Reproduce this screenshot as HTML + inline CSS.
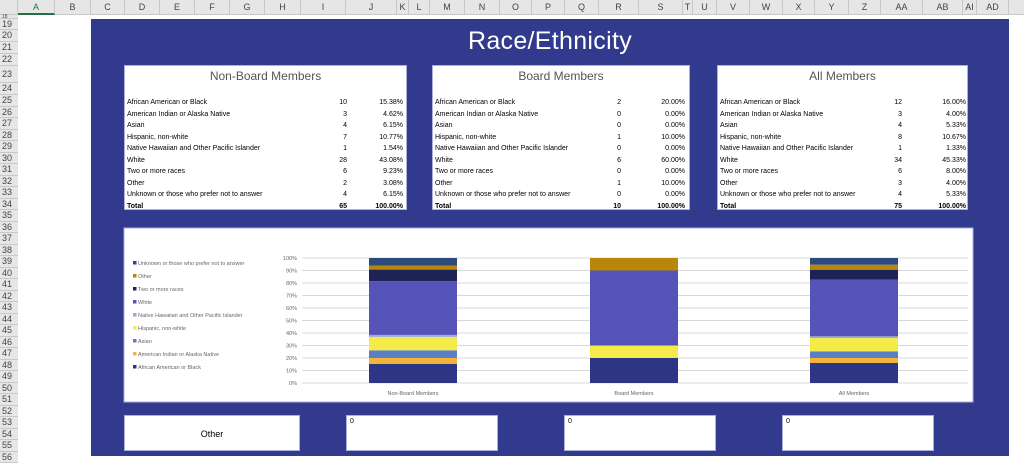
<!DOCTYPE html>
<html><head><meta charset="utf-8"><style>
*{margin:0;padding:0;box-sizing:border-box}
body{width:1024px;height:458px;overflow:hidden;background:#fff;position:relative;font-family:"Liberation Sans",sans-serif}
.hdr{position:absolute;top:0;left:0;width:1024px;height:15px;background:#e6e6e6;border-bottom:1px solid #c8c8c8}
.ch{position:absolute;top:0;height:15px;font-size:9px;color:#444;text-align:center;line-height:15px;border-right:1px solid #c8c8c8}
.rn{position:absolute;left:0;width:18px;font-size:9px;color:#444;background:#e6e6e6;border-bottom:1px solid #c8c8c8;line-height:11px;padding-left:2px}
.blue{position:absolute;left:91px;top:19px;width:918px;height:437px;background:#313a8c}
.title{position:absolute;left:91px;width:918px;top:27px;text-align:center;color:#fff;font-size:25px;letter-spacing:.3px}
.card{position:absolute;background:#fff;border:1px solid #aab0d8}
.card h3{font-weight:normal;font-size:12px;text-align:center;color:#555;margin-top:3px;height:28px}
.card table{border-collapse:collapse;font-size:7px;color:#000;margin-left:2px}
.card td{height:11.5px;padding:0}
.card td.n{text-align:right}
.card tr.t td{font-weight:bold}
.box{position:absolute;background:#fff;border:1px solid #aab0d8;font-size:7px;padding:2px 3px}
</style></head><body>
<div class="hdr"></div>
<div class="ch" style="left:0;width:18px"></div>
<div class="ch" style="left:18px;width:37px;border-bottom:2px solid #217346;color:#217346">A</div>
<div class="ch" style="left:55px;width:36px">B</div>
<div class="ch" style="left:91px;width:34px">C</div>
<div class="ch" style="left:125px;width:35px">D</div>
<div class="ch" style="left:160px;width:35px">E</div>
<div class="ch" style="left:195px;width:35px">F</div>
<div class="ch" style="left:230px;width:35px">G</div>
<div class="ch" style="left:265px;width:36px">H</div>
<div class="ch" style="left:301px;width:45px">I</div>
<div class="ch" style="left:346px;width:51px">J</div>
<div class="ch" style="left:397px;width:12px">K</div>
<div class="ch" style="left:409px;width:21px">L</div>
<div class="ch" style="left:430px;width:35px">M</div>
<div class="ch" style="left:465px;width:35px">N</div>
<div class="ch" style="left:500px;width:32px">O</div>
<div class="ch" style="left:532px;width:33px">P</div>
<div class="ch" style="left:565px;width:34px">Q</div>
<div class="ch" style="left:599px;width:40px">R</div>
<div class="ch" style="left:639px;width:44px">S</div>
<div class="ch" style="left:683px;width:10px">T</div>
<div class="ch" style="left:693px;width:24px">U</div>
<div class="ch" style="left:717px;width:33px">V</div>
<div class="ch" style="left:750px;width:33px">W</div>
<div class="ch" style="left:783px;width:32px">X</div>
<div class="ch" style="left:815px;width:34px">Y</div>
<div class="ch" style="left:849px;width:32px">Z</div>
<div class="ch" style="left:881px;width:42px">AA</div>
<div class="ch" style="left:923px;width:40px">AB</div>
<div class="ch" style="left:963px;width:14px">AI</div>
<div class="ch" style="left:977px;width:32px">AD</div>

<div class="rn" style="top:15px;height:4px;line-height:4px;font-size:5px">18</div>
<div class="rn" style="top:19px;height:11px">19</div>
<div class="rn" style="top:30px;height:12px">20</div>
<div class="rn" style="top:42px;height:12px">21</div>
<div class="rn" style="top:54px;height:12px">22</div>
<div class="rn" style="top:66px;height:17px;line-height:17px">23</div>
<div class="rn" style="top:83px;height:12px">24</div>
<div class="rn" style="top:95px;height:11.5px">25</div>
<div class="rn" style="top:106.5px;height:11.5px">26</div>
<div class="rn" style="top:118px;height:11.5px">27</div>
<div class="rn" style="top:129.5px;height:11.5px">28</div>
<div class="rn" style="top:141px;height:11.5px">29</div>
<div class="rn" style="top:152.5px;height:11.5px">30</div>
<div class="rn" style="top:164px;height:11.5px">31</div>
<div class="rn" style="top:175.5px;height:11.5px">32</div>
<div class="rn" style="top:187px;height:11.5px">33</div>
<div class="rn" style="top:198.5px;height:11.5px">34</div>
<div class="rn" style="top:210px;height:11.5px">35</div>
<div class="rn" style="top:221.5px;height:11.5px">36</div>
<div class="rn" style="top:233px;height:11.5px">37</div>
<div class="rn" style="top:244.5px;height:11.5px">38</div>
<div class="rn" style="top:256px;height:11.5px">39</div>
<div class="rn" style="top:267.5px;height:11.5px">40</div>
<div class="rn" style="top:279px;height:11.5px">41</div>
<div class="rn" style="top:290.5px;height:11.5px">42</div>
<div class="rn" style="top:302px;height:11.5px">43</div>
<div class="rn" style="top:313.5px;height:11.5px">44</div>
<div class="rn" style="top:325px;height:11.5px">45</div>
<div class="rn" style="top:336.5px;height:11.5px">46</div>
<div class="rn" style="top:348px;height:11.5px">47</div>
<div class="rn" style="top:359.5px;height:11.5px">48</div>
<div class="rn" style="top:371px;height:11.5px">49</div>
<div class="rn" style="top:382.5px;height:11.5px">50</div>
<div class="rn" style="top:394px;height:11.5px">51</div>
<div class="rn" style="top:405.5px;height:11.5px">52</div>
<div class="rn" style="top:417px;height:11.5px">53</div>
<div class="rn" style="top:428.5px;height:11.5px">54</div>
<div class="rn" style="top:440px;height:11.5px">55</div>
<div class="rn" style="top:451.5px;height:11.5px">56</div>

<div class="blue"></div>
<div class="title">Race/Ethnicity</div>

<div class="card" style="left:124px;top:65px;width:283px;height:145px"><h3>Non-Board Members</h3><table style="width:276px">
<tr><td>African American or Black</td><td class="n" style="width:30px">10</td><td class="n" style="width:56px">15.38%</td></tr>
<tr><td>American Indian or Alaska Native</td><td class="n">3</td><td class="n">4.62%</td></tr>
<tr><td>Asian</td><td class="n">4</td><td class="n">6.15%</td></tr>
<tr><td>Hispanic, non-white</td><td class="n">7</td><td class="n">10.77%</td></tr>
<tr><td>Native Hawaiian and Other Pacific Islander</td><td class="n">1</td><td class="n">1.54%</td></tr>
<tr><td>White</td><td class="n">28</td><td class="n">43.08%</td></tr>
<tr><td>Two or more races</td><td class="n">6</td><td class="n">9.23%</td></tr>
<tr><td>Other</td><td class="n">2</td><td class="n">3.08%</td></tr>
<tr><td>Unknown or those who prefer not to answer</td><td class="n">4</td><td class="n">6.15%</td></tr>
<tr class="t"><td>Total</td><td class="n">65</td><td class="n">100.00%</td></tr></table></div>

<div class="card" style="left:432px;top:65px;width:258px;height:145px"><h3>Board Members</h3><table style="width:250px">
<tr><td>African American or Black</td><td class="n" style="width:30px">2</td><td class="n" style="width:64px">20.00%</td></tr>
<tr><td>American Indian or Alaska Native</td><td class="n">0</td><td class="n">0.00%</td></tr>
<tr><td>Asian</td><td class="n">0</td><td class="n">0.00%</td></tr>
<tr><td>Hispanic, non-white</td><td class="n">1</td><td class="n">10.00%</td></tr>
<tr><td>Native Hawaiian and Other Pacific Islander</td><td class="n">0</td><td class="n">0.00%</td></tr>
<tr><td>White</td><td class="n">6</td><td class="n">60.00%</td></tr>
<tr><td>Two or more races</td><td class="n">0</td><td class="n">0.00%</td></tr>
<tr><td>Other</td><td class="n">1</td><td class="n">10.00%</td></tr>
<tr><td>Unknown or those who prefer not to answer</td><td class="n">0</td><td class="n">0.00%</td></tr>
<tr class="t"><td>Total</td><td class="n">10</td><td class="n">100.00%</td></tr></table></div>

<div class="card" style="left:717px;top:65px;width:251px;height:145px"><h3>All Members</h3><table style="width:246px">
<tr><td>African American or Black</td><td class="n" style="width:36px">12</td><td class="n" style="width:64px">16.00%</td></tr>
<tr><td>American Indian or Alaska Native</td><td class="n">3</td><td class="n">4.00%</td></tr>
<tr><td>Asian</td><td class="n">4</td><td class="n">5.33%</td></tr>
<tr><td>Hispanic, non-white</td><td class="n">8</td><td class="n">10.67%</td></tr>
<tr><td>Native Hawaiian and Other Pacific Islander</td><td class="n">1</td><td class="n">1.33%</td></tr>
<tr><td>White</td><td class="n">34</td><td class="n">45.33%</td></tr>
<tr><td>Two or more races</td><td class="n">6</td><td class="n">8.00%</td></tr>
<tr><td>Other</td><td class="n">3</td><td class="n">4.00%</td></tr>
<tr><td>Unknown or those who prefer not to answer</td><td class="n">4</td><td class="n">5.33%</td></tr>
<tr class="t"><td>Total</td><td class="n">75</td><td class="n">100.00%</td></tr></table></div>

<svg style="position:absolute;left:0;top:0" width="1024" height="458" font-family="Liberation Sans, sans-serif">
<rect x="124" y="228" width="849" height="174" fill="#fff" stroke="#aab0d8"/>
<g stroke="#d9d9d9" stroke-width="1">
<line x1="302" x2="968" y1="258" y2="258"/><line x1="302" x2="968" y1="270.5" y2="270.5"/><line x1="302" x2="968" y1="283" y2="283"/><line x1="302" x2="968" y1="295.5" y2="295.5"/><line x1="302" x2="968" y1="308" y2="308"/><line x1="302" x2="968" y1="320.5" y2="320.5"/><line x1="302" x2="968" y1="333" y2="333"/><line x1="302" x2="968" y1="345.5" y2="345.5"/><line x1="302" x2="968" y1="358" y2="358"/><line x1="302" x2="968" y1="370.5" y2="370.5"/><line x1="302" x2="968" y1="383" y2="383"/>
</g>
<g font-size="5.5" fill="#666" text-anchor="end">
<text x="297" y="260">100%</text><text x="297" y="272.5">90%</text><text x="297" y="285">80%</text><text x="297" y="297.5">70%</text><text x="297" y="310">60%</text><text x="297" y="322.5">50%</text><text x="297" y="335">40%</text><text x="297" y="347.5">30%</text><text x="297" y="360">20%</text><text x="297" y="372.5">10%</text><text x="297" y="385">0%</text>
</g>
<g>
<rect x="369" y="363.8" width="88" height="19.2" fill="#2e3585"/>
<rect x="369" y="358" width="88" height="5.8" fill="#f4b43c"/>
<rect x="369" y="350.3" width="88" height="7.7" fill="#5b7fc4"/>
<rect x="369" y="336.9" width="88" height="13.4" fill="#f4ea4a"/>
<rect x="369" y="334.9" width="88" height="2" fill="#9aabd8"/>
<rect x="369" y="281.1" width="88" height="53.8" fill="#5552b8"/>
<rect x="369" y="269.6" width="88" height="11.5" fill="#1f2255"/>
<rect x="369" y="265.7" width="88" height="3.9" fill="#b8860b"/>
<rect x="369" y="258" width="88" height="7.7" fill="#2d4a7a"/>

<rect x="590" y="358" width="88" height="25" fill="#2e3585"/>
<rect x="590" y="345.5" width="88" height="12.5" fill="#f4ea4a"/>
<rect x="590" y="270.5" width="88" height="75" fill="#5552b8"/>
<rect x="590" y="258" width="88" height="12.5" fill="#b8860b"/>

<rect x="810" y="363" width="88" height="20" fill="#2e3585"/>
<rect x="810" y="358" width="88" height="5" fill="#f4b43c"/>
<rect x="810" y="351.3" width="88" height="6.7" fill="#5b7fc4"/>
<rect x="810" y="338" width="88" height="13.3" fill="#f4ea4a"/>
<rect x="810" y="336.3" width="88" height="1.7" fill="#9aabd8"/>
<rect x="810" y="279.7" width="88" height="56.6" fill="#5552b8"/>
<rect x="810" y="269.7" width="88" height="10" fill="#1f2255"/>
<rect x="810" y="264.7" width="88" height="5" fill="#b8860b"/>
<rect x="810" y="258" width="88" height="6.7" fill="#2d4a7a"/>
</g>
<g font-size="5.5" fill="#666" text-anchor="middle">
<text x="413" y="395">Non-Board Members</text><text x="634" y="395">Board Members</text><text x="854" y="395">All Members</text>
</g>
<g font-size="5.5" fill="#666">
<rect x="133" y="261" width="3.5" height="3.5" fill="#2d4a7a"/><text x="138" y="265">Unknown or those who prefer not to answer</text>
<rect x="133" y="274" width="3.5" height="3.5" fill="#b8860b"/><text x="138" y="278">Other</text>
<rect x="133" y="287" width="3.5" height="3.5" fill="#1f2255"/><text x="138" y="291">Two or more races</text>
<rect x="133" y="300" width="3.5" height="3.5" fill="#5552b8"/><text x="138" y="304">White</text>
<rect x="133" y="313" width="3.5" height="3.5" fill="#9aabd8"/><text x="138" y="317">Native Hawaiian and Other Pacific Islander</text>
<rect x="133" y="326" width="3.5" height="3.5" fill="#f4ea4a"/><text x="138" y="330">Hispanic, non-white</text>
<rect x="133" y="339" width="3.5" height="3.5" fill="#5b7fc4"/><text x="138" y="343">Asian</text>
<rect x="133" y="352" width="3.5" height="3.5" fill="#f4b43c"/><text x="138" y="356">American Indian or Alaska Native</text>
<rect x="133" y="365" width="3.5" height="3.5" fill="#2e3585"/><text x="138" y="369">African American or Black</text>
</g>
</svg>

<div class="box" style="left:124px;top:415px;width:176px;height:36px;font-size:9px;text-align:center;line-height:32px">Other</div>
<div class="box" style="left:346px;top:415px;width:152px;height:36px">0</div>
<div class="box" style="left:564px;top:415px;width:152px;height:36px">0</div>
<div class="box" style="left:782px;top:415px;width:152px;height:36px">0</div>
</body></html>
